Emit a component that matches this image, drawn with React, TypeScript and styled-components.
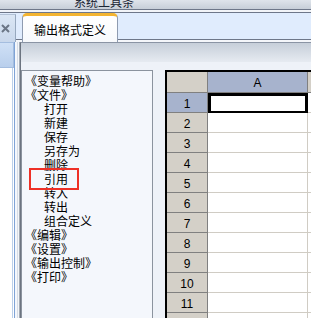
import React from "react";
import styled, { createGlobalStyle } from "styled-components";

const GlobalStyle = createGlobalStyle`
  html, body { margin: 0; padding: 0; }
  body {
    width: 311px;
    height: 318px;
    overflow: hidden;
    background: #ffffff;
    font-family: "Noto Sans CJK SC", "Liberation Sans", sans-serif;
  }
`;

const Frame = styled.div`
  width: 311px;
  height: 318px;
  display: flex;
  flex-direction: column;
  overflow: hidden;
`;

const TitleStrip = styled.div`
  height: 9px;
  flex: none;
  display: flex;
  align-items: flex-end;
  padding-left: 74px;
  overflow: hidden;
  background: linear-gradient(#dfe4eb, #c7ced8);
`;

const TitleText = styled.span`
  font-size: 12px;
  line-height: 12px;
  margin-bottom: 1px;
  color: #1a2433;
  white-space: nowrap;
`;

const TabBar = styled.div`
  height: 33px;
  flex: none;
  display: flex;
  align-items: flex-end;
  background: linear-gradient(
    to bottom,
    #6e7789 0 1px,
    #f2f4f8 1px 3px,
    #6e7789 3px 4px,
    #e0ecfd 4px 30px,
    #6e7789 30px 31px,
    #f4f6fa 31px 33px
  );
`;

const DockTab = styled.div`
  width: 16px;
  height: 28px;
  box-sizing: border-box;
  display: flex;
  align-items: center;
  justify-content: center;
  padding-right: 4px;
  background: linear-gradient(#dbe6f4, #c9d8ec);
  border-right: 1px solid #97a8be;
  border-top: 1px solid #b3c2d6;
`;

const Tab = styled.div`
  margin-left: 6px;
  width: 96px;
  height: 29px;
  box-sizing: border-box;
  display: flex;
  align-items: center;
  justify-content: center;
  padding-top: 1px;
  background: linear-gradient(#ffffff, #f7f9fc);
  border: 1px solid #8e9bb0;
  border-top: 3px solid #f3b431;
  border-bottom: none;
  border-radius: 5px 5px 0 0;
  font-size: 12px;
  line-height: 14px;
  color: #000;
`;

const MainRow = styled.div`
  flex: 1;
  display: flex;
  min-height: 0;
`;

const LeftStrip = styled.div`
  width: 20px;
  flex: none;
  display: flex;
  flex-direction: column;
  background: linear-gradient(
    to right,
    #ffffff 0 12px,
    #bcd0ea 12px 13px,
    #ffffff 13px 14px,
    #7fa3d6 14px 15px,
    #f4f7fc 15px 17px,
    #d6dce5 17px 18px,
    #f4f6f9 18px 19px,
    #a3abb6 19px 20px
  );
`;

const DockHeader = styled.div`
  width: 14px;
  height: 26px;
  box-sizing: border-box;
  background: linear-gradient(#cfe0f6, #b9cfec);
  border: 1px solid #a4bddf;
  border-left: none;
`;

const Content = styled.div`
  flex: 1;
  display: flex;
  flex-direction: column;
  border-left: 1px solid #6c7480;
  border-top: 1px solid #8a94a4;
  min-width: 0;
`;

const ContentHeader = styled.div`
  height: 19px;
  flex: none;
  background: linear-gradient(#c6ced9, #e6ebf1);
`;

const Panel = styled.div`
  flex: 1;
  display: flex;
  gap: 12px;
  align-items: flex-start;
  padding-top: 8px;
  background: #eef2f8;
  min-height: 0;
`;

const ListBox = styled.div`
  position: relative;
  width: 132px;
  height: 300px;
  flex: none;
  box-sizing: border-box;
  border: 1px solid #8b939e;
  background: #f4f7fc;
  padding: 3px 0 0 1px;
`;

const ListItem = styled.div<{ $indent?: boolean }>`
  font-size: 12px;
  line-height: 14px;
  height: 14px;
  color: #000;
  white-space: nowrap;
  padding-left: ${(p) => (p.$indent ? "21px" : "2px")};
`;

const Highlight = styled.div`
  position: absolute;
  left: 7px;
  top: 97px;
  width: 50px;
  height: 22px;
  box-sizing: border-box;
  border: 2px solid #ee3026;
`;

const Sheet = styled.div`
  flex: 1;
  min-width: 0;
  height: 300px;
  overflow: hidden;
  background: #ffffff;
  border-left: 2px solid #000;
  border-top: 2px solid #000;
  font-family: "Liberation Sans", "DejaVu Sans", sans-serif;
  font-size: 12px;
`;

const SheetRow = styled.div<{ $head?: boolean }>`
  display: flex;
  height: ${(p) => (p.$head ? "21px" : "20px")};
`;

const RowHead = styled.div<{ $selected?: boolean }>`
  width: 41px;
  flex: none;
  box-sizing: border-box;
  display: flex;
  align-items: center;
  justify-content: center;
  padding-top: 2px;
  background: ${(p) => (p.$selected ? "#a7b3cd" : "#d4d0c8")};
  border-right: 1px solid #808080;
  border-bottom: 1px solid #808080;
  color: #000;
`;

const ColHead = styled.div<{ $selected?: boolean; $w: number }>`
  width: ${(p) => p.$w}px;
  flex: none;
  box-sizing: border-box;
  display: flex;
  align-items: center;
  justify-content: center;
  padding-top: 2px;
  background: ${(p) => (p.$selected ? "#a7b3cd" : "#d4d0c8")};
  border-right: 1px solid #808080;
  border-bottom: 1px solid #808080;
  color: #000;
`;

const Cell = styled.div<{ $w: number; $active?: boolean }>`
  position: relative;
  width: ${(p) => p.$w}px;
  flex: none;
  box-sizing: border-box;
  border-right: 1px solid #d0ccc4;
  border-bottom: 1px solid #d0ccc4;
  background: #fff;
  ${(p) =>
    p.$active
      ? `
    &::after {
      content: "";
      position: absolute;
      left: 0;
      top: 0;
      right: -1px;
      bottom: -2px;
      border: 3px solid #000;
    }
  `
      : ""}
`;

const items: { text: string; indent?: boolean }[] = [
  { text: "《变量帮助》" },
  { text: "《文件》" },
  { text: "打开", indent: true },
  { text: "新建", indent: true },
  { text: "保存", indent: true },
  { text: "另存为", indent: true },
  { text: "删除", indent: true },
  { text: "引用", indent: true },
  { text: "转入", indent: true },
  { text: "转出", indent: true },
  { text: "组合定义", indent: true },
  { text: "《编辑》" },
  { text: "《设置》" },
  { text: "《输出控制》" },
  { text: "《打印》" },
];

const rows = Array.from({ length: 12 }, (_, i) => i + 1);

export default function App() {
  return (
    <Frame>
      <GlobalStyle />
      <TitleStrip>
        <TitleText>系统工具条</TitleText>
      </TitleStrip>
      <TabBar>
        <DockTab>
          <svg width="9" height="9" viewBox="0 0 9 9">
            <path d="M1 1 L8 8 M8 1 L1 8" stroke="#6b7686" strokeWidth="2" />
          </svg>
        </DockTab>
        <Tab>输出格式定义</Tab>
      </TabBar>
      <MainRow>
        <LeftStrip>
          <DockHeader />
        </LeftStrip>
        <Content>
          <ContentHeader />
          <Panel>
            <ListBox>
              {items.map((it) => (
                <ListItem key={it.text} $indent={it.indent}>
                  {it.text}
                </ListItem>
              ))}
              <Highlight />
            </ListBox>
            <Sheet>
              <SheetRow $head>
                <RowHead />
                <ColHead $w={100} $selected>
                  A
                </ColHead>
                <ColHead $w={40} />
              </SheetRow>
              {rows.map((r) => (
                <SheetRow key={r}>
                  <RowHead $selected={r === 1}>{r < 12 ? r : ""}</RowHead>
                  <Cell $w={100} $active={r === 1} />
                  <Cell $w={40} />
                </SheetRow>
              ))}
            </Sheet>
          </Panel>
        </Content>
      </MainRow>
    </Frame>
  );
}
